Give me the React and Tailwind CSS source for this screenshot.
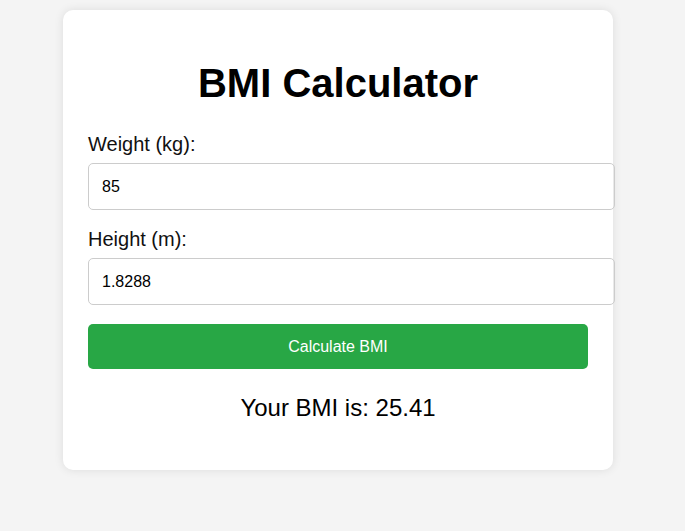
export default function App() {
  return (
    <div className="min-h-screen bg-[#f4f4f4] pt-[10px] font-['Liberation_Sans',Arial,sans-serif]">
      <div className="ml-[63px] w-[550px] h-[460px] bg-white rounded-[10px] shadow-[0_0_10px_rgba(0,0,0,0.1)] px-[25px] pt-[50px]">
        <h1 className="text-center text-[40px] leading-[46px] font-bold text-black">BMI Calculator</h1>

        <label className="block mt-[27px] text-[20px] leading-[23px] text-[#111]">Weight (kg):</label>
        <input
          type="number"
          defaultValue="85"
          className="block mt-[7px] w-[527px] h-[47px] px-[13px] text-[16px] text-black border border-[#ccc] rounded-[5px] outline-none"
        />

        <label className="block mt-[18px] text-[20px] leading-[23px] text-[#111]">Height (m):</label>
        <input
          type="number"
          defaultValue="1.8288"
          className="block mt-[7px] w-[527px] h-[47px] px-[13px] text-[16px] text-black border border-[#ccc] rounded-[5px] outline-none"
        />

        <button className="block mt-[19px] w-full h-[45px] bg-[#28a745] text-white text-[16px] rounded-[5px]">
          Calculate BMI
        </button>

        <p className="mt-[25px] text-center text-[24px] leading-[28px] text-black">Your BMI is: 25.41</p>
      </div>
    </div>
  );
}
